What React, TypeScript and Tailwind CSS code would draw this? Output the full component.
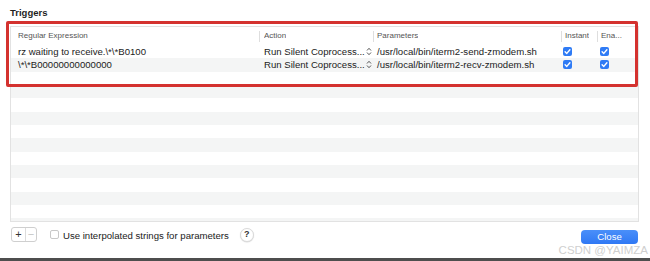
import React from 'react';

const rows = [
  {
    regex: 'rz waiting to receive.\\*\\*B0100',
    action: 'Run Silent Coprocess...',
    params: '/usr/local/bin/iterm2-send-zmodem.sh',
  },
  {
    regex: '\\*\\*B00000000000000',
    action: 'Run Silent Coprocess...',
    params: '/usr/local/bin/iterm2-recv-zmodem.sh',
  },
];

function Checked() {
  return (
    <div className="flex h-[9px] w-[9px] items-center justify-center rounded-[2px] bg-[#2f7bf5]">
      <svg width="9" height="9" viewBox="0 0 9 9">
        <path
          d="M2.1 4.7 L3.8 6.4 L6.9 2.7"
          fill="none"
          stroke="white"
          strokeWidth="1.4"
          strokeLinecap="round"
          strokeLinejoin="round"
        />
      </svg>
    </div>
  );
}

function UpDown() {
  return (
    <svg width="6" height="9" viewBox="0 0 6 9">
      <path d="M1 3.5 L3 1.3 L5 3.5" fill="none" stroke="#555" strokeWidth="1" />
      <path d="M1 5.5 L3 7.7 L5 5.5" fill="none" stroke="#555" strokeWidth="1" />
    </svg>
  );
}

function HeaderCell({ label, divider, pl }: { label: string; divider?: boolean; pl: string }) {
  return (
    <div className={`relative flex h-full items-center ${pl}`}>
      {divider && <span className="absolute left-0 top-[4px] h-[11px] w-px bg-[#dedede]" />}
      <span className="truncate">{label}</span>
    </div>
  );
}

export default function App() {
  const empty = Array.from({ length: 12 });

  return (
    <div
      className="relative flex h-[261px] w-[650px] flex-col overflow-hidden bg-white text-[#222]"
      style={{ fontFamily: '"Liberation Sans", Arial, sans-serif' }}
    >
      <div className="pl-[10px] pt-[7px] text-[9.5px] font-bold leading-[12px] text-[#1f1f1f]">
        Triggers
      </div>

      <div className="ml-[10px] mt-[7px] h-[196px] w-[629px] overflow-hidden border border-[#e2e2e2] bg-white">
        <div className="grid h-[18px] grid-cols-[248px_114px_188px_36px_1fr] text-[8px] text-[#555]">
          <HeaderCell label="Regular Expression" pl="pl-[7px]" />
          <HeaderCell label="Action" divider pl="pl-[5px]" />
          <HeaderCell label="Parameters" divider pl="pl-[4px]" />
          <HeaderCell label="Instant" divider pl="pl-[4px]" />
          <HeaderCell label="Ena..." divider pl="pl-[4px]" />
        </div>

        {rows.map((r, i) => (
          <div
            key={i}
            className={`grid h-[13.33px] grid-cols-[248px_114px_188px_36px_1fr] items-center text-[9.6px] leading-[13px] ${
              i % 2 === 1 ? 'bg-[#f4f5f5]' : 'bg-white'
            }`}
          >
            <div className="truncate pl-[7px]">{r.regex}</div>
            <div className="flex items-center justify-between pl-[5px] pr-[1px]">
              <span className="truncate">{r.action}</span>
              <UpDown />
            </div>
            <div className="truncate pl-[4px]">{r.params}</div>
            <div className="pl-[2px]">
              <Checked />
            </div>
            <div className="pl-[3px]">
              <Checked />
            </div>
          </div>
        ))}

        {empty.map((_, i) => (
          <div key={i} className={`h-[13.33px] ${i % 2 === 1 ? 'bg-[#f4f5f5]' : 'bg-white'}`} />
        ))}
      </div>

      <div className="mt-[5px] flex h-[17px] items-start text-[9.6px]">
        <div className="ml-[11px] flex h-[15px] w-[26px] overflow-hidden rounded-[3px] border border-[#cfcfcf]">
          <div className="flex w-[14px] items-center justify-center border-r border-[#dcdcdc] text-[11px] leading-none text-[#333]">
            +
          </div>
          <div className="flex flex-1 items-center justify-center text-[11px] leading-none text-[#c4c4c4]">
            −
          </div>
        </div>
        <div className="ml-[13px] mt-[3px] h-[9px] w-[9px] rounded-[2px] border border-[#c8c8c8] bg-white" />
        <span className="ml-[4px] mt-[1px] leading-[16px]">Use interpolated strings for parameters</span>
        <div className="ml-[11px] mt-[1px] flex h-[14px] w-[14px] items-center justify-center rounded-full border border-[#dadada] bg-white text-[9px] font-bold text-[#333] shadow-[0_0.5px_1px_rgba(0,0,0,0.15)]">
          ?
        </div>
        <button className="ml-auto mr-[12px] mt-[3px] flex h-[14px] w-[57px] items-center justify-center rounded-[4px] bg-gradient-to-b from-[#4a8ff9] to-[#2f78f4] text-[9.6px] text-white">
          Close
        </button>
      </div>

      <div className="mt-auto h-[3px] w-full bg-[#4e4e4e]" />

      <div className="pointer-events-none absolute left-[6px] top-[21px] h-[66px] w-[632px] rounded-[2px] border-[3px] border-[#d4322f]" />
      <div className="pointer-events-none absolute right-[2px] top-[244px] text-[11.5px] leading-[13px] text-[#cfcfcf]">
        CSDN @YAIMZA
      </div>
    </div>
  );
}
